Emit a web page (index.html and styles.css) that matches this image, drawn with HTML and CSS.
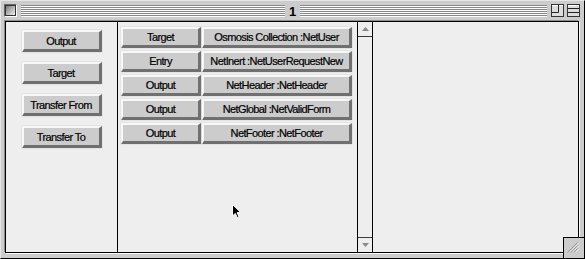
FILE: index.html
```html
<!DOCTYPE html>
<html>
<head>
<meta charset="utf-8">
<link rel="stylesheet" href="styles.css">
</head>
<body>
<div class="window">
  <div class="titlebar">
    <div class="closebox"><span></span></div>
    <div class="stripes s1"></div>
    <div class="title">1</div>
    <div class="stripes s2"></div>
    <svg class="wbox zoombox" width="13" height="13" viewBox="0 0 13 13">
      <rect x="0.5" y="0.5" width="12" height="12" fill="#dcdcdc" stroke="#333"/>
      <line x1="1" y1="1.5" x2="12" y2="1.5" stroke="#fff"/>
      <polyline points="7.5,1 7.5,8.5 1,8.5" fill="none" stroke="#222"/>
    </svg>
    <svg class="wbox collapsebox" width="13" height="13" viewBox="0 0 13 13">
      <rect x="0.5" y="0.5" width="12" height="12" fill="#dcdcdc" stroke="#333"/>
      <line x1="1" y1="1.5" x2="12" y2="1.5" stroke="#fff"/>
      <line x1="1" y1="4.5" x2="12" y2="4.5" stroke="#222"/>
      <line x1="1" y1="8.5" x2="12" y2="8.5" stroke="#222"/>
    </svg>
  </div>
  <div class="frame">
    <div class="panel left">
      <div class="btn lbtn">Output</div>
      <div class="btn lbtn">Target</div>
      <div class="btn lbtn">Transfer From</div>
      <div class="btn lbtn">Transfer To</div>
    </div>
    <div class="panel middle">
      <div class="row"><div class="btn kind">Target</div><div class="btn name">Osmosis Collection :NetUser</div></div>
      <div class="row"><div class="btn kind">Entry</div><div class="btn name">NetInert :NetUserRequestNew</div></div>
      <div class="row"><div class="btn kind">Output</div><div class="btn name">NetHeader :NetHeader</div></div>
      <div class="row"><div class="btn kind">Output</div><div class="btn name">NetGlobal :NetValidForm</div></div>
      <div class="row"><div class="btn kind">Output</div><div class="btn name">NetFooter :NetFooter</div></div>
    </div>
    <div class="scrollbar">
      <div class="arrow up"><svg width="7" height="4" viewBox="0 0 7 4"><polygon points="0,4 7,4 3.5,0" fill="#8a8a8a"/></svg></div>
      <div class="track"></div>
      <div class="arrow down"><svg width="7" height="4" viewBox="0 0 7 4"><polygon points="0,0 7,0 3.5,4" fill="#8a8a8a"/></svg></div>
    </div>
    <div class="panel right"></div>
  </div>
  <div class="growbox">
    <svg width="20" height="20" viewBox="0 0 20 20">
      <g stroke-width="1">
        <line x1="4" y1="14.5" x2="14" y2="4.5" stroke="#666"/>
        <line x1="5" y1="14.5" x2="15" y2="4.5" stroke="#fff"/>
        <line x1="7" y1="14.5" x2="14" y2="7.5" stroke="#666"/>
        <line x1="8" y1="14.5" x2="15" y2="7.5" stroke="#fff"/>
        <line x1="10" y1="14.5" x2="14" y2="10.5" stroke="#666"/>
        <line x1="11" y1="14.5" x2="15" y2="10.5" stroke="#fff"/>
      </g>
    </svg>
  </div>
  <svg class="cursor" width="11" height="17" viewBox="0 0 11 17">
    <path d="M1.5 1.5 V13 L4.3 10.4 L6.3 14.8 L8 14 L6.1 9.6 H9.8 Z" fill="#000" stroke="#fff" stroke-width="1"/>
  </svg>
</div>
</body>
</html>
```

FILE: styles.css
```css
html, body {
  margin: 0;
  padding: 0;
}
body {
  width: 585px;
  height: 259px;
  overflow: hidden;
  background: #cccccc;
  font-family: "Liberation Sans", Arial, sans-serif;
}
.window {
  position: relative;
  box-sizing: border-box;
  width: 585px;
  height: 259px;
  background: #cccccc;
  border-top: 1px solid #e6e6e6;
  border-left: 1px solid #e6e6e6;
  border-right: 1px solid #000;
  border-bottom: 1px solid #000;
  padding: 0 5px 5px 4px;
  display: flex;
  flex-direction: column;
}
.titlebar {
  height: 20px;
  flex: none;
  margin: 0 -5px 0 -4px;
  padding: 3px 4px 0 3px;
  box-sizing: border-box;
  display: flex;
  align-items: flex-start;
}
.closebox {
  box-sizing: border-box;
  width: 13px;
  height: 13px;
  border: 1px solid;
  border-color: #666 #fff #fff #666;
  flex: none;
}
.closebox span {
  display: block;
  box-sizing: border-box;
  width: 11px;
  height: 11px;
  border: 1px solid #333;
  background: linear-gradient(135deg, #7a7a7a, #f0f0f0);
}
.stripes {
  height: 12px;
  margin-top: 1px;
  background: repeating-linear-gradient(to bottom, #888 0 1px, #fafafa 1px 2px);
}
.s1 {
  width: 264px;
  margin-left: 4px;
  flex: none;
}
.s2 {
  flex: 1;
}
.title {
  width: 15px;
  flex: none;
  text-align: center;
  font-weight: bold;
  font-size: 13px;
  line-height: 13px;
  margin-top: 1px;
}
.wbox {
  display: block;
  flex: none;
}
.zoombox {
  margin-left: 4px;
}
.collapsebox {
  margin-left: 3px;
}
.frame {
  flex: 1;
  display: flex;
  border: 1px solid #000;
  background: #eeeeee;
  box-shadow: -1px -1px 0 #8c8c8c, 1px 1px 0 #fafafa;
}
.panel.left {
  width: 112px;
  border-right: 1px solid #000;
  display: flex;
  flex-direction: column;
  align-items: center;
  padding-top: 8px;
  gap: 10px;
  box-sizing: border-box;
}
.panel.middle {
  width: 236px;
  border-right: 1px solid #000;
  padding: 5px 0 0 3px;
  box-sizing: content-box;
  display: flex;
  flex-direction: column;
  gap: 3px;
}
.row {
  display: flex;
  gap: 1px;
}
.scrollbar {
  width: 14px;
  border-right: 1px solid #000;
  display: flex;
  flex-direction: column;
}
.arrow {
  height: 14px;
  flex: none;
  display: flex;
  align-items: center;
  justify-content: center;
}
.arrow svg {
  display: block;
}
.arrow.up {
  border-bottom: 1px solid #3a3a3a;
}
.arrow.down {
  border-top: 1px solid #3a3a3a;
}
.track {
  flex: 1;
}
.panel.right {
  flex: 1;
}
.btn {
  box-sizing: border-box;
  background: #cccccc;
  border-style: solid;
  border-width: 2px 3px 3px 2px;
  border-color: #f8f8f8 #707070 #707070 #f8f8f8;
  box-shadow: 0 0 0 0.5px #d8d8d8;
  font-size: 11px;
  letter-spacing: -0.6px;
  -webkit-text-stroke: 0.2px #000;
  color: #000;
  display: flex;
  align-items: center;
  justify-content: center;
  white-space: nowrap;
  flex: none;
}
.lbtn {
  width: 80px;
  height: 22px;
}
.kind {
  width: 80px;
  height: 21px;
}
.name {
  width: 150px;
  height: 21px;
}
.growbox {
  position: absolute;
  left: 562px;
  top: 236px;
  right: 0;
  bottom: 0;
  background: #cccccc;
  border-top: 1px solid #000;
  border-left: 1px solid #000;
}
.growbox svg {
  display: block;
}
.cursor {
  position: absolute;
  left: 230px;
  top: 202px;
}
```
